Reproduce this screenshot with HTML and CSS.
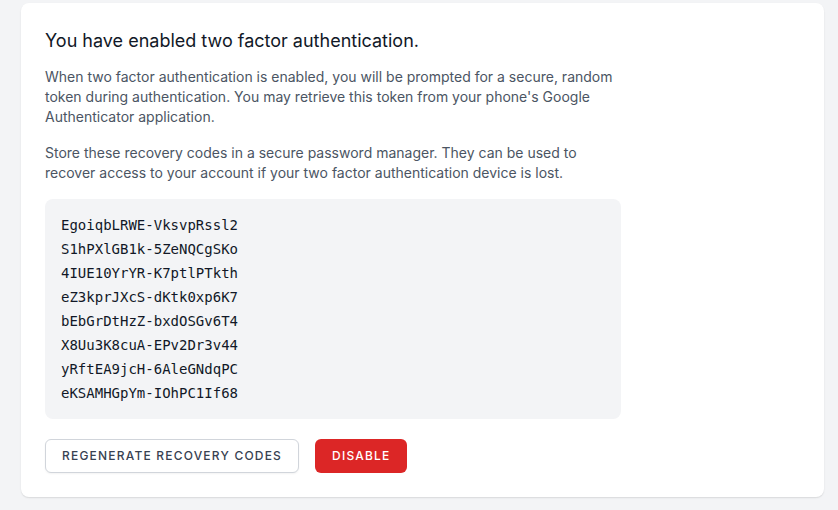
FILE: index.html
```html
<!DOCTYPE html>
<html lang="en">
<head>
<meta charset="utf-8">
<title>Two Factor Authentication</title>
<link rel="stylesheet" href="styles.css">
</head>
<body>
  <div class="card">
    <h3 class="title">You have enabled two factor authentication.</h3>
    <p class="text">When two factor authentication is enabled, you will be prompted for a secure, random token during authentication. You may retrieve this token from your phone's Google Authenticator application.</p>
    <p class="text text-gap">Store these recovery codes in a secure password manager. They can be used to recover access to your account if your two factor authentication device is lost.</p>
    <div class="codes">
      <div>EgoiqbLRWE-VksvpRssl2</div>
      <div>S1hPXlGB1k-5ZeNQCgSKo</div>
      <div>4IUE10YrYR-K7ptlPTkth</div>
      <div>eZ3kprJXcS-dKtk0xp6K7</div>
      <div>bEbGrDtHzZ-bxdOSGv6T4</div>
      <div>X8Uu3K8cuA-EPv2Dr3v44</div>
      <div>yRftEA9jcH-6AleGNdqPC</div>
      <div>eKSAMHGpYm-IOhPC1If68</div>
    </div>
    <div class="actions">
      <button class="btn btn-secondary" type="button">Regenerate Recovery Codes</button>
      <button class="btn btn-danger" type="button">Disable</button>
    </div>
  </div>
</body>
</html>
```

FILE: styles.css
```css
* { box-sizing: border-box; }
html, body { margin: 0; }
body {
  background: #f3f4f6;
  padding: 3px 14px 13px 21px;
  font-family: Inter, "Noto Sans", sans-serif;
  color: #111827;
}
.card {
  background: #fff;
  border-radius: 8px;
  box-shadow: 0 1px 2px 0 rgba(0,0,0,0.08), 0 1px 1px rgba(0,0,0,0.04);
  padding: 24px;
}
.title {
  margin: 0;
  font-size: 18px;
  line-height: 28px;
  font-weight: 400;
  color: #111827;
}
.text {
  margin: 12px 0 0;
  max-width: 576px;
  font-size: 14px;
  line-height: 20px;
  color: #4b5563;
}
.text-gap { margin-top: 16px; }
.codes {
  margin-top: 16px;
  max-width: 576px;
  background: #f3f4f6;
  border-radius: 8px;
  padding: 16px;
  display: grid;
  gap: 4px;
  font-family: "DejaVu Sans Mono", monospace;
  font-size: 14px;
  line-height: 20px;
  color: #111827;
}
.actions {
  margin-top: 20px;
  display: flex;
  gap: 16px;
}
.btn {
  display: inline-flex;
  align-items: center;
  padding: 8px 16px;
  border-radius: 6px;
  font-family: Inter, "Noto Sans", sans-serif;
  font-size: 12px;
  line-height: 16px;
  font-weight: 500;
  letter-spacing: 0.1em;
  text-transform: uppercase;
  cursor: pointer;
}
.btn-secondary {
  background: #fff;
  border: 1px solid #d1d5db;
  color: #374151;
  box-shadow: 0 1px 2px 0 rgba(0,0,0,0.05);
}
.btn-danger {
  background: #dc2626;
  border: 1px solid transparent;
  color: #fff;
}
```
